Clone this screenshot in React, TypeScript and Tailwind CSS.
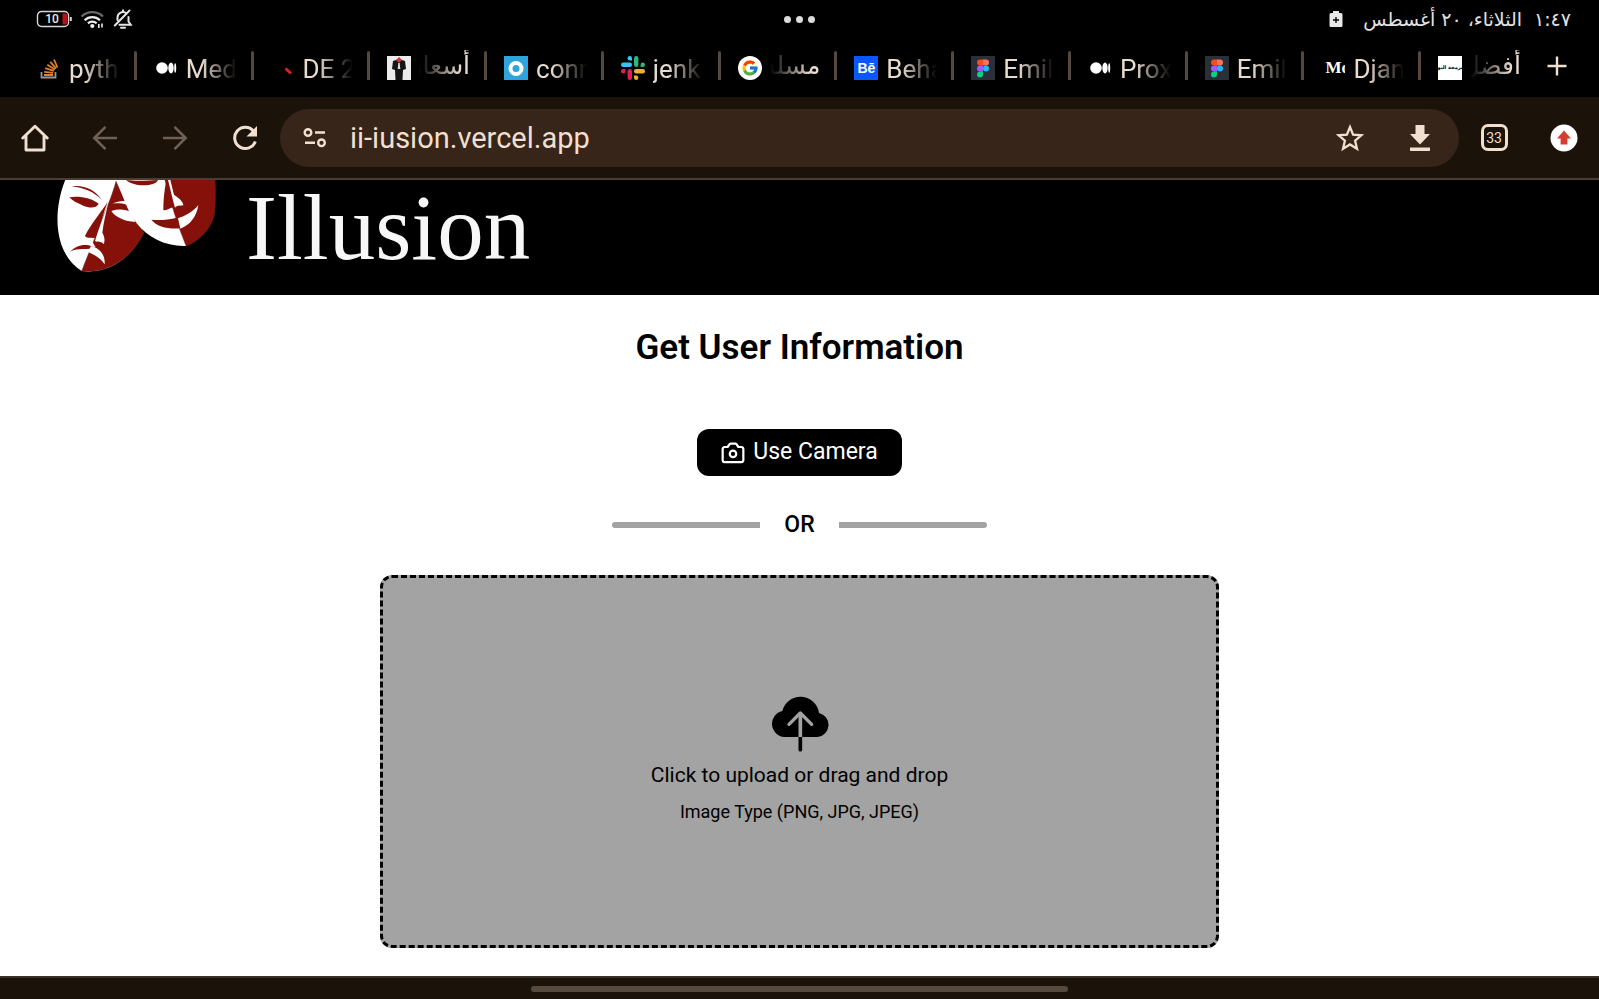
import React from "react";
import { FcGoogle } from "react-icons/fc";

const LATIN = "font-['Roboto','Noto_Sans',sans-serif]";

function StackOverflowIcon() {
  return (
    <svg viewBox="0 0 24 24" className="size-6" fill="none">
      <path d="M4.500 16v5.500h14V16" stroke="#8d98a5" strokeWidth="1.800" />
      <path d="M7 19h9M7.200 15.800l8.900 1M8.200 12.200l8.600 2.600M10.300 8.800l7.600 4.700M13.300 5.800l5.800 6.600M17 3.500l3.500 8" stroke="#e0812f" strokeWidth="1.800" />
    </svg>
  );
}

function MediumIcon() {
  return (
    <svg viewBox="0 0 24 24" className="size-6" fill="#fff">
      <circle cx="8" cy="12" r="5.800" />
      <ellipse cx="17" cy="12" rx="2.700" ry="5.400" />
      <ellipse cx="21.200" cy="12" rx="1" ry="4.800" />
    </svg>
  );
}

function DashIcon() {
  return (
    <svg viewBox="0 0 24 24" className="size-6">
      <path d="M14.500 12.500l5.500 5" stroke="#e11d1d" strokeWidth="3" />
    </svg>
  );
}

function SuitIcon() {
  return (
    <svg viewBox="0 0 24 24" className="size-6">
      <path d="M0 0h24v24H0z" fill="#ececec" />
      <path d="M6 5q6-3 12 0l1 8-3 1-.500 10h-7L8 14l-3-1z" fill="#151515" />
      <path d="M12 1l3 3-3 3-3-3z" fill="#c53a3a" />
      <path d="M11.300 7h1.400l.6 6h-2.600z" fill="#ddd" />
    </svg>
  );
}

function RingIcon() {
  return (
    <svg viewBox="0 0 24 24" className="size-6">
      <path d="M0 0h24v24H0z" fill="#2ea3dc" />
      <circle cx="12" cy="12.500" r="5.500" fill="none" stroke="#fff" strokeWidth="4" />
    </svg>
  );
}

function SlackIcon() {
  return (
    <svg viewBox="0 0 24 24" className="size-6">
      <g fill="#36c5f0">
        <rect x="0" y="6.600" width="11" height="4.400" rx="2.200" />
        <path d="M8.800 0a2.200 2.200 0 1 0 0 4.400H11V2.200A2.200 2.200 0 0 0 8.800 0z" />
      </g>
      <g fill="#2eb67d">
        <rect x="13" y="0" width="4.400" height="11" rx="2.200" />
        <path d="M24 8.800a2.200 2.200 0 1 0-4.400 0V11h2.200A2.200 2.200 0 0 0 24 8.800z" />
      </g>
      <g fill="#ecb22e">
        <rect x="13" y="13" width="11" height="4.400" rx="2.200" />
        <path d="M15.200 24a2.200 2.200 0 1 0 0-4.400H13v2.200A2.200 2.200 0 0 0 15.200 24z" />
      </g>
      <g fill="#e01e5a">
        <rect x="6.600" y="13" width="4.400" height="11" rx="2.200" />
        <path d="M0 15.200a2.200 2.200 0 1 0 4.400 0V13H2.200A2.200 2.200 0 0 0 0 15.200z" />
      </g>
    </svg>
  );
}

function GoogleIcon() {
  return (
    <span className="flex size-6 items-center justify-center rounded-full bg-white">
      <FcGoogle className="size-[18px]" />
    </span>
  );
}

function BehanceIcon() {
  return (
    <span className="flex size-6 items-center justify-center bg-[#0a57ff] font-['Liberation_Sans',sans-serif] text-[14px] font-bold text-white">
      Bē
    </span>
  );
}

function FigmaIcon() {
  return (
    <svg viewBox="0 0 24 24" className="size-6">
      <path d="M0 0h24v24H0z" fill="#2b2f38" />
      <path d="M12 3.500H9a3 3 0 0 0 0 6h3z" fill="#f24e1e" />
      <path d="M12 3.500h3a3 3 0 0 1 0 6h-3z" fill="#ff7262" />
      <path d="M12 9.500H9a3 3 0 0 0 0 6h3z" fill="#a259ff" />
      <circle cx="15" cy="12.500" r="3" fill="#1abcfe" />
      <path d="M9 15.500h3v3a3 3 0 1 1-3-3z" fill="#0acf83" />
    </svg>
  );
}

function SerifIcon() {
  return (
    <span className="flex size-6 items-center overflow-hidden pl-1 font-['Liberation_Serif',serif] text-[17px] font-bold text-white">
      Mo
    </span>
  );
}

function CourseIcon() {
  return (
    <span className="flex size-6 items-center justify-center overflow-hidden bg-white font-['DejaVu_Sans',sans-serif] text-[5px] font-bold whitespace-nowrap text-black">
      البرمجة اليوم
    </span>
  );
}

type Tab = { title: string; icon: React.ReactNode; rtl?: boolean };

const tabs: Tab[] = [
  { title: "pytho", icon: <StackOverflowIcon /> },
  { title: "Medi", icon: <MediumIcon /> },
  { title: "DE 2", icon: <DashIcon /> },
  { title: "أسعار", icon: <SuitIcon />, rtl: true },
  { title: "conn", icon: <RingIcon /> },
  { title: "jenk", icon: <SlackIcon /> },
  { title: "مسلس", icon: <GoogleIcon />, rtl: true },
  { title: "Beha", icon: <BehanceIcon /> },
  { title: "Emil", icon: <FigmaIcon /> },
  { title: "Prox", icon: <MediumIcon /> },
  { title: "Emil", icon: <FigmaIcon /> },
  { title: "Djan", icon: <SerifIcon /> },
  { title: "أفضل", icon: <CourseIcon />, rtl: true },
];

function StatusBar() {
  return (
    <div className="grid h-[38px] grid-cols-3 items-center text-[#e2e2e2]">
      <div className="flex items-center gap-2 pl-9">
        <svg viewBox="0 0 36 18" className="h-[18px] w-9" fill="none">
          <rect x="1.500" y="1.500" width="31" height="15" rx="4" stroke="#d6d6d6" strokeWidth="1.400" />
          <path d="M26.500 3.500h3a1.500 1.500 0 0 1 1.500 1.500v8a1.500 1.500 0 0 1-1.500 1.500h-3z" fill="#b3131b" />
          <path d="M34.800 7v4" stroke="#d6d6d6" strokeWidth="2" />
          <text x="16" y="13.300" textAnchor="middle" fontFamily="Roboto" fontSize="12" fontWeight="500" fill="#e8e8e8">10</text>
        </svg>
        <svg viewBox="0 0 25 20" className="h-5 w-[25px]" fill="none" strokeWidth="2.200">
          <path d="M1.500 7.500a15.500 15.500 0 0 1 21.500 0" stroke="#686868" />
          <path d="M4.600 11.200a11 11 0 0 1 15.400 0M8 14.400a6.200 6.200 0 0 1 8.600 0" stroke="#ededed" />
          <circle cx="12.300" cy="17" r="2.100" fill="#ededed" />
          <path d="M18.800 15v4M22 14.500v4" stroke="#ededed" strokeWidth="1.600" />
        </svg>
        <svg viewBox="0 0 20 20" className="size-5" fill="none" stroke="#e6e6e6" strokeWidth="2" strokeLinecap="round">
          <path d="M4.500 11V8.500a5.500 5.500 0 0 1 9-4.200M15.500 8v4.500l2.200 3.200H6.500" />
          <path d="M16.500 1.500L1.800 16.500M8 18.800h4M10 1.300v1.200" />
        </svg>
      </div>
      <div className="flex items-center justify-center gap-[5px]">
        <span className="size-[7px] rounded-full bg-[#dcdcdc]" />
        <span className="size-[7px] rounded-full bg-[#dcdcdc]" />
        <span className="size-[7px] rounded-full bg-[#dcdcdc]" />
      </div>
      <div dir="rtl" className="flex items-center gap-3 pr-7 font-['DejaVu_Sans',sans-serif] text-[19px] leading-6 whitespace-nowrap">
        <span>١:٤٧</span>
        <span>الثلاثاء، ٢٠ أغسطس</span>
        <svg viewBox="0 0 14 16" className="mr-2 h-4 w-[14px]">
          <path d="M4 0h6v2h2a1.500 1.500 0 0 1 1.500 1.500v11A1.500 1.500 0 0 1 12 16H2A1.500 1.500 0 0 1 .500 14.500v-11A1.500 1.500 0 0 1 2 2h2z" fill="#e8e8e8" />
          <path d="M7 6v6M4 9h6" stroke="#000" strokeWidth="1.300" />
        </svg>
      </div>
    </div>
  );
}

function TabStrip() {
  return (
    <div className="flex h-[59px] items-start px-5">
      <div className="flex min-w-0 flex-1 pt-3">
        {tabs.map((tab, i) => (
          <React.Fragment key={i}>
            {i > 0 && <span className="mt-px h-[29px] w-[3px] shrink-0 rounded-t-sm bg-[#55483f]" />}
            <button type="button" className="flex min-w-0 flex-1 items-start gap-2 pr-[14px] pl-[17px]">
              <span className="mt-[6px] shrink-0">{tab.icon}</span>
              {tab.rtl ? (
                <span
                  dir="rtl"
                  className="min-w-0 flex-1 overflow-hidden font-['DejaVu_Sans',sans-serif] text-[25px] leading-8 whitespace-nowrap text-[#e9dccf] [mask-image:linear-gradient(to_left,black_20%,transparent)]"
                >
                  {tab.title}
                </span>
              ) : (
                <span className="min-w-0 flex-1 overflow-hidden text-left text-[26px] leading-[38px] whitespace-nowrap text-[#e9dccf] [mask-image:linear-gradient(to_right,black_30%,transparent)]">
                  {tab.title}
                </span>
              )}
            </button>
          </React.Fragment>
        ))}
      </div>
      <button type="button" aria-label="New tab" className="flex h-14 w-11 items-center justify-center">
        <svg viewBox="0 0 20 20" className="size-5" stroke="#eee0d3" strokeWidth="2.400">
          <path d="M10 0.500v19M0.500 10h19" />
        </svg>
      </button>
    </div>
  );
}

function ToolButton({ label, children }: { label: string; children: React.ReactNode }) {
  return (
    <button type="button" aria-label={label} className="flex w-[70px] shrink-0 items-center justify-center self-stretch">
      {children}
    </button>
  );
}

function Toolbar() {
  return (
    <div className="flex h-[83px] items-center border-b-2 border-[#4a3e34] bg-[#1b120a] text-[#f1dfd0]">
      <ToolButton label="Home">
        <svg viewBox="0 0 28 28" className="size-7" fill="none" stroke="currentColor" strokeWidth="2.900" strokeLinejoin="round" strokeLinecap="round">
          <path d="M1.800 14L14 2.200 26.200 14M5 11.500v14.500h18V11.500" />
        </svg>
      </ToolButton>
      <ToolButton label="Back">
        <svg viewBox="0 0 26 26" className="size-[26px]" fill="none" stroke="#6f6154" strokeWidth="2.600">
          <path d="M25 13H3M13.500 1.800L2.300 13l11.200 11.200" />
        </svg>
      </ToolButton>
      <ToolButton label="Forward">
        <svg viewBox="0 0 26 26" className="size-[26px]" fill="none" stroke="#6f6154" strokeWidth="2.600">
          <path d="M1 13h22M12.500 1.800L23.700 13 12.500 24.200" />
        </svg>
      </ToolButton>
      <ToolButton label="Reload">
        <svg viewBox="0 0 26 26" className="size-[26px]" fill="none">
          <path d="M21.500 6.200A10.600 10.600 0 1 0 23.300 16.500" stroke="currentColor" strokeWidth="3" />
          <path d="M25 1v10.500H14.500z" fill="currentColor" />
        </svg>
      </ToolButton>
      <div className="flex h-[58px] min-w-0 flex-1 items-center rounded-full bg-[#362518] pr-1">
        <ToolButton label="Site settings">
          <svg viewBox="0 0 24 22" className="h-[22px] w-6" fill="none" stroke="currentColor" strokeWidth="2.400">
            <circle cx="5" cy="5.500" r="3.300" />
            <path d="M12 5.500h10M2 15.800h10" />
            <circle cx="18.500" cy="15.800" r="3.300" />
          </svg>
        </ToolButton>
        <input
          aria-label="Address"
          type="text"
          defaultValue="ii-iusion.vercel.app"
          className="min-w-0 flex-1 bg-transparent text-[29px] leading-9 text-[#f1dfd0] outline-none"
        />
        <ToolButton label="Bookmark">
          <svg viewBox="0 0 28 28" className="size-7" fill="none" stroke="currentColor" strokeWidth="2.300">
            <path d="M14 3l3.100 7.600 8.300.7-6.300 5.400 1.900 8L14 20.400l-7 4.300 1.900-8-6.300-5.400 8.300-.7z" />
          </svg>
        </ToolButton>
        <ToolButton label="Download">
          <svg viewBox="0 0 22 26" className="h-[26px] w-[22px]" fill="currentColor">
            <path d="M6.500 0h9v9H21L11 19.500 1 9h5.500zM1 22.500h20V26H1z" />
          </svg>
        </ToolButton>
      </div>
      <ToolButton label="Switch tabs">
        <span className="flex size-[27px] items-center justify-center rounded-[7px] border-[3px] border-[#f1dfd0] text-[14px] leading-4">33</span>
      </ToolButton>
      <ToolButton label="Update available">
        <svg viewBox="0 0 28 28" className="size-7">
          <circle cx="14" cy="14" r="13.500" fill="#fff" />
          <path d="M14 6.500l7 8h-3.600v6h-6.800v-6H7z" fill="#d63d31" />
        </svg>
      </ToolButton>
    </div>
  );
}

function Masks() {
  return (
    <svg viewBox="45 30 489 345" className="h-[115px] w-[163px] shrink-0" role="img" aria-label="Illusion masks">
      <path d="M80 20C55 75 48 140 55 185C62 235 85 278 125 303C200 312 270 270 310 190L240 20z" fill="#fff" />
      <path d="M228 33C215 80 200 115 183 152C165 205 145 250 125 303C205 312 275 265 312 188C280 140 250 85 228 33z" fill="#86110b" stroke="#5b3a37" strokeWidth="1" />
      <path d="M228 20C240 60 254 96 268 126L290 160C325 203 375 230 438 228L470 120 430 20z" fill="#fff" />
      <path d="M372 20C390 90 410 160 438 228C475 215 515 178 524 130C527 95 527 60 525 20z" fill="#86110b" stroke="#5b3a37" strokeWidth="1" />
      <path d="M95 49C130 44 165 58 186 90C162 66 135 54 95 49z" fill="#86110b" />
      <path d="M88 82C115 76 155 84 176 101C168 116 148 114 130 107C110 99 97 92 88 82z" fill="#86110b" />
      <path d="M203 95C185 125 150 165 135 198C140 206 150 202 158 204L170 203C180 165 190 130 203 95z" fill="#86110b" />
      <path d="M204 102C190 140 175 180 165 213C173 218 182 211 191 222C196 212 193 198 187 188C190 160 198 130 204 102z" fill="#fff" />
      <path d="M90 245C105 230 125 222 146 226L172 234C140 240 115 232 90 245z" fill="#86110b" />
      <path d="M153 228C180 235 196 255 194 283C180 262 158 252 144 246z" fill="#fff" />
      <path d="M155 212l-4 16 16 4z" fill="#fff" />
      <path d="M256 93C242 92 230 95 217 101C232 99 245 100 260 104z" fill="#fff" />
      <path d="M214 123C235 116 258 118 274 127L286 156C255 154 225 142 214 123z" fill="#fff" />
      <path d="M258 30C285 34 325 32 354 30C348 46 315 48 290 44C275 41 265 37 258 30z" fill="#86110b" />
      <path d="M379 30C372 65 370 95 370 120C380 124 390 112 402 112L384 30z" fill="#86110b" />
      <path d="M384 30C392 60 398 90 405 113C412 105 420 108 430 106C430 94 416 84 402 74L391 30z" fill="#fff" />
      <path d="M334 149C360 152 385 149 411 143L420 175C385 178 350 170 334 149z" fill="#86110b" />
      <path d="M414 145C435 138 460 125 475 105C470 140 450 165 421 176z" fill="#fff" />
    </svg>
  );
}

function SiteHeader() {
  return (
    <header className="flex h-[115px] items-start gap-7 overflow-hidden bg-black pl-[55px]">
      <Masks />
      <span className="font-['Liberation_Serif',serif] text-[93px] leading-[96px] text-[#f7f7f7]">Illusion</span>
    </header>
  );
}

function UploadCloud() {
  return (
    <svg viewBox="390 48 180 168" className="h-14 w-[60px]" fill="none" strokeLinecap="round" strokeLinejoin="round">
      <path d="M433 171A39.500 39.500 0 0 1 427 93A56 56 0 0 1 537 99A36.500 36.500 0 0 1 532 171z" fill="#000" />
      <path d="M481 171v38" stroke="#000" strokeWidth="11" />
      <path d="M481 171V98" stroke="#a3a3a3" strokeWidth="11" strokeLinecap="butt" />
      <path d="M447 133l34-34 34 34" stroke="#a3a3a3" strokeWidth="10" />
    </svg>
  );
}

export default function App() {
  return (
    <div className={`${LATIN} flex min-h-screen flex-col bg-black`}>
      <StatusBar />
      <TabStrip />
      <Toolbar />
      <SiteHeader />
      <main className="flex flex-1 flex-col items-center bg-white pt-[31px] pb-7 text-black">
        <h1 className="text-[35px] leading-[44px] font-semibold">Get User Information</h1>
        <button type="button" className="mt-[59px] flex h-[47px] items-center gap-2 rounded-xl bg-black px-6 text-[23px] text-white">
          <svg viewBox="0 0 26 26" className="size-6" fill="none" stroke="currentColor" strokeWidth="2.400" strokeLinejoin="round">
            <path d="M4 6.500h3.200L9.300 3.500q.5-.700 1.300-.7h4.800q.8 0 1.300.7l2.100 3H22A2.500 2.500 0 0 1 24.200 9v11.500A2.500 2.500 0 0 1 22 23H4a2.500 2.500 0 0 1-2.200-2.500V9A2.500 2.500 0 0 1 4 6.500z" />
            <circle cx="13" cy="14" r="3.500" />
          </svg>
          Use Camera
        </button>
        <div className="mt-[33px] flex items-center gap-6">
          <span className="h-[6px] w-[148px] rounded-l-full bg-[#a3a3a3]" />
          <span className="text-[23px] leading-8 font-medium">OR</span>
          <span className="h-[6px] w-[148px] rounded-r-full bg-[#a3a3a3]" />
        </div>
        <label className="mt-[34px] flex w-[52.5%] flex-1 cursor-pointer flex-col items-center justify-center rounded-xl border-[3px] border-dashed border-black bg-[#a3a3a3] pt-9 pb-10">
          <UploadCloud />
          <span className="mt-[9px] text-[21px] leading-7">Click to upload or drag and drop</span>
          <span className="mt-[11px] text-[18px] leading-6">Image Type (PNG, JPG, JPEG)</span>
          <input type="file" accept="image/png,image/jpeg" className="sr-only" />
        </label>
      </main>
      <footer className="flex h-[23px] items-center justify-center border-t-2 border-[#3a3028] bg-[#1b120a]">
        <span className="h-[6px] w-[33.6%] rounded-full bg-[#564a3f]" />
      </footer>
    </div>
  );
}
